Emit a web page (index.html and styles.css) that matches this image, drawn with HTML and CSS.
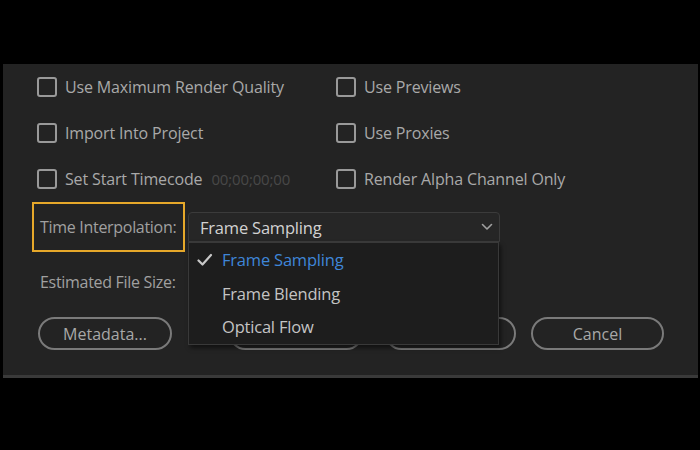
FILE: index.html
```html
<!DOCTYPE html>
<html>
<head>
<meta charset="utf-8">
<link rel="stylesheet" href="styles.css">
</head>
<body>
<div class="panel">
  <div class="checks">
    <label class="chk"><span class="box"></span><span>Use Maximum Render Quality</span></label>
    <label class="chk"><span class="box"></span><span>Use Previews</span></label>
    <label class="chk"><span class="box"></span><span>Import Into Project</span></label>
    <label class="chk"><span class="box"></span><span>Use Proxies</span></label>
    <label class="chk"><span class="box"></span><span>Set Start Timecode</span><span class="tc">00;00;00;00</span></label>
    <label class="chk"><span class="box"></span><span>Render Alpha Channel Only</span></label>
  </div>
  <div class="interp">
    <div class="hl">Time Interpolation:</div>
    <div class="selwrap">
      <div class="select">
        <span>Frame Sampling</span>
        <svg class="chev" width="12" height="8" viewBox="0 0 12 8"><path d="M1.5 1.5 L6 6 L10.5 1.5" fill="none" stroke="#a0a0a0" stroke-width="1.6" stroke-linecap="round" stroke-linejoin="round"/></svg>
      </div>
      <div class="menu">
        <div class="item sel"><svg class="tick" width="16" height="14" viewBox="0 0 16 14"><path d="M1.5 7.5 L5.5 11.5 L14 2" fill="none" stroke="#c8c8c8" stroke-width="2.2" stroke-linecap="round" stroke-linejoin="round"/></svg><span>Frame Sampling</span></div>
        <div class="item"><span class="ind"></span><span>Frame Blending</span></div>
        <div class="item"><span class="ind"></span><span>Optical Flow</span></div>
      </div>
    </div>
  </div>
  <div class="est">Estimated File Size:</div>
  <div class="buttons">
    <div class="btn b1">Metadata...</div>
    <div class="btn b2"></div>
    <div class="btn b3"></div>
    <div class="btn b4">Cancel</div>
  </div>
</div>
</body>
</html>
```
FILE: styles.css
```css
html, body {
  margin: 0;
  padding: 0;
  background: #000;
  width: 700px;
  height: 450px;
  overflow: hidden;
  font-family: "Open Sans", "Noto Sans", sans-serif;
}
.panel {
  margin: 66px 2px 0 3px;
  height: 311px;
  background: #232323;
  border-bottom: 3px solid #3a3a3a;
  box-sizing: content-box;
  position: relative;
}
.checks {
  display: grid;
  grid-template-columns: 299px 1fr;
  grid-auto-rows: 46px;
  padding-left: 34px;
  margin-top: -2px;
}
.chk {
  display: flex;
  align-items: center;
  color: #a9a9a9;
  font-size: 16px;
  letter-spacing: -0.15px;
}
.box {
  width: 16px;
  height: 16px;
  border: 2px solid #999;
  border-radius: 3px;
  margin-right: 8px;
  flex: none;
}
.tc {
  color: #484848;
  margin-left: 9px;
  font-size: 15px;
}
.interp {
  display: flex;
  align-items: center;
  margin-top: 0;
  padding-left: 29px;
}
.hl {
  width: 143px;
  height: 46px;
  border: 2px solid #e6a82a;
  display: flex;
  align-items: center;
  padding-left: 6px;
  color: #a0a0a0;
  font-size: 16px;
  letter-spacing: -0.3px;
}
.selwrap {
  position: relative;
  margin-left: 3px;
}
.select {
  height: 28px;
  border: 1px solid #3b3b3b;
  border-radius: 4px 4px 0 0;
  background: #262626;
  display: flex;
  align-items: center;
  justify-content: space-between;
  padding: 0 6px 0 11px;
  box-sizing: content-box;
  width: 293px;
  color: #d2d2d2;
  font-size: 16.5px;
  letter-spacing: -0.2px;
}
.menu {
  position: absolute;
  left: 0;
  top: 30px;
  width: 309px;
  height: 101px;
  background: #1d1d1d;
  border: 1px solid #393939;
  box-shadow: 2px 3px 4px rgba(0,0,0,0.5);
  z-index: 2;
}
.item {
  height: 33.5px;
  display: flex;
  align-items: center;
  padding-left: 8px;
  color: #c4c4c4;
  font-size: 16.5px;
  letter-spacing: -0.2px;
}
.item.sel {
  color: #3f86d8;
}
.tick, .ind {
  width: 16px;
  margin-right: 9px;
  flex: none;
}
.est {
  color: #a0a0a0;
  font-size: 16px;
  letter-spacing: -0.3px;
  padding-left: 37px;
  margin-top: 18px;
  height: 24px;
  line-height: 24px;
}
.buttons {
  display: flex;
  margin-top: 23px;
  padding-left: 35px;
}
.btn {
  height: 29px;
  border: 2px solid #7a7a7a;
  border-radius: 17px;
  display: flex;
  align-items: center;
  justify-content: center;
  color: #a8a8a8;
  font-size: 16px;
  flex: none;
}
.b1 { width: 130px; }
.b2 { width: 130px; margin-left: 57px; }
.b3 { width: 127px; margin-left: 22px; }
.b4 { width: 129px; margin-left: 15px; }
```
